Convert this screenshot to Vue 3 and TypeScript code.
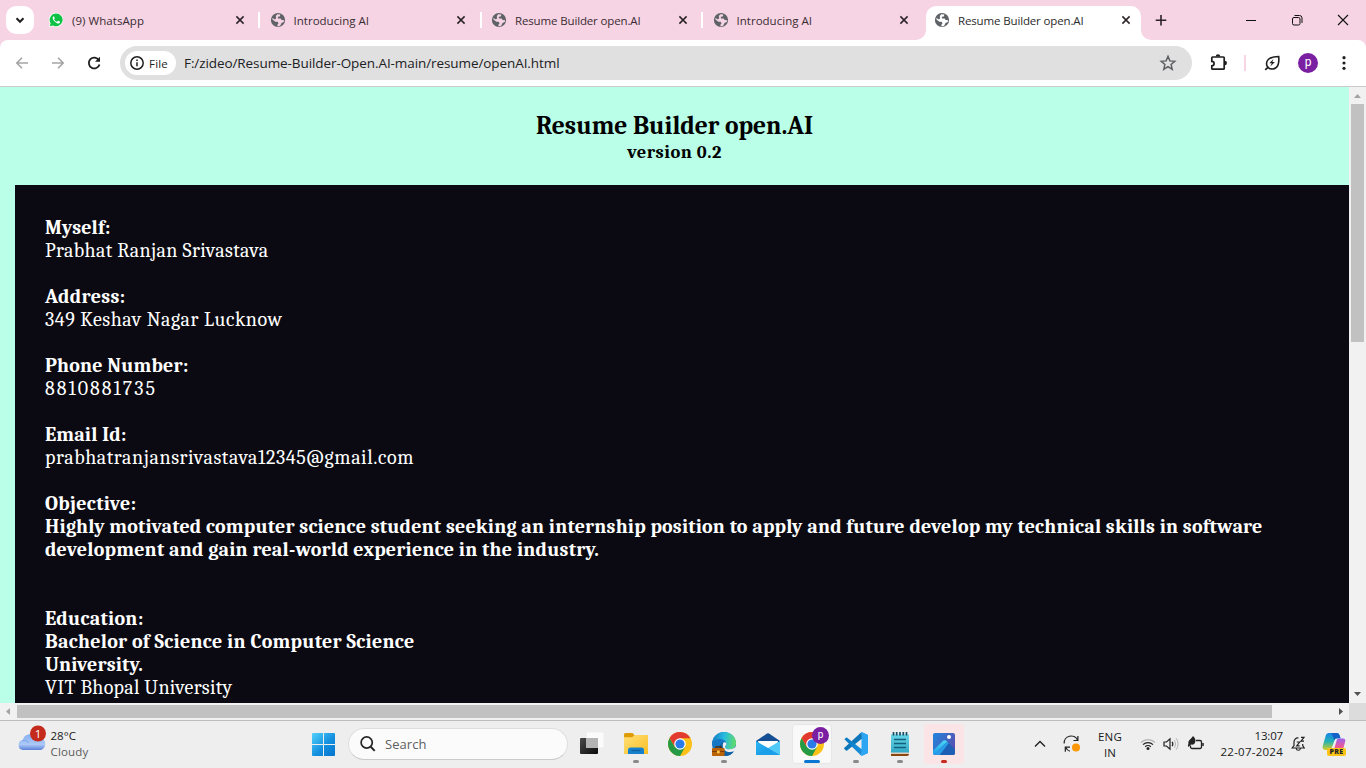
<script setup lang="ts">
import type { Directive } from 'vue'

interface Tab {
  title: string
  width: number
  icon: 'whatsapp' | 'globe'
  active?: boolean
}

interface Line {
  text: string
  width: number
  bold?: boolean
}

const tabs: Tab[] = [
  { title: '(9) WhatsApp', width: 72, icon: 'whatsapp' },
  { title: 'Introducing AI', width: 75.5, icon: 'globe' },
  { title: 'Resume Builder open.AI', width: 125.5, icon: 'globe' },
  { title: 'Introducing AI', width: 75.5, icon: 'globe' },
  { title: 'Resume Builder open.AI', width: 125.5, icon: 'globe', active: true },
]

const sections: Line[][] = [
  [
    { text: 'Myself:', width: 65.5, bold: true },
    { text: 'Prabhat Ranjan Srivastava', width: 223.5 },
  ],
  [
    { text: 'Address:', width: 80.5, bold: true },
    { text: '349 Keshav Nagar Lucknow', width: 237.5 },
  ],
  [
    { text: 'Phone Number:', width: 143.5, bold: true },
    { text: '8810881735', width: 112 },
  ],
  [
    { text: 'Email Id:', width: 81.5, bold: true },
    { text: 'prabhatranjansrivastava12345@gmail.com', width: 369 },
  ],
  [
    { text: 'Objective:', width: 91.5, bold: true },
    {
      text: 'Highly motivated computer science student seeking an internship position to apply and future develop my technical skills in software',
      width: 1217.5,
      bold: true,
    },
    { text: 'development and gain real-world experience in the industry.', width: 554, bold: true },
    { text: '\u00a0', width: 0 },
  ],
  [
    { text: 'Education:', width: 98.5, bold: true },
    { text: 'Bachelor of Science in Computer Science', width: 369.5, bold: true },
    { text: 'University.', width: 98, bold: true },
    { text: 'VIT Bhopal University', width: 187.5 },
  ],
]

// Spreads the letters of a text so that it takes the given width.
const vFit: Directive<HTMLElement, number> = {
  mounted(el, { value }) {
    const count = (el.textContent ?? '').trim().length
    if (!value || count < 2) return
    const natural = el.getBoundingClientRect().width
    el.style.letterSpacing = `${(value - natural) / count}px`
  },
}
</script>

<template>
  <div class="screen">
    <header class="tabstrip">
      <button class="tab-search">
        <svg width="28" height="28" viewBox="0 0 28 28"><path d="M10.500 12.300l3.500 3.500 3.500-3.500" fill="none" stroke="#1f1f1f" stroke-width="2" /></svg>
      </button>
      <div class="tabs">
        <div v-for="(tab, i) in tabs" :key="i" class="tab" :class="{ active: tab.active }">
          <svg v-if="tab.icon === 'whatsapp'" class="favicon" viewBox="0 0 16 16">
            <path d="M8 .7a7.200 7.200 0 0 0-6.200 10.900L.8 15.300l3.800-1A7.200 7.200 0 1 0 8 .7z" fill="#fff" />
            <path d="M8.100 1.500a6.400 6.400 0 0 0-5.500 9.700l-.8 3 3.100-.8a6.400 6.400 0 1 0 3.200-11.900z" fill="#0cc143" />
            <path d="M5.500 4.400c-.8.5-1.100 1.500-.6 2.700.9 2 2.400 3.500 4.500 4.300 1.200.4 2.200 0 2.600-.9.2-.6.1-.8-.2-1l-1.400-.7c-.3-.1-.4 0-.6.2l-.5.6c-.2.2-.3.2-.6.1-1.100-.5-1.900-1.200-2.500-2.300-.1-.2-.1-.3.1-.5l.4-.6V5.900l-.6-1.400c-.1-.2-.3-.2-.6-.1z" fill="#fff" />
          </svg>
          <svg v-else class="favicon" viewBox="0 0 16 16">
            <circle cx="8" cy="8" r="7.100" fill="#5f6368" />
            <path d="M7.400 2.300l3 .3-.6 1.800-2 .4.200 1.700h2.600l1 1.400 2.600.4-.5 1.800-2.200.8-1.300 2.900-2.600.6-.2-1.700 1.200-1.500-1.100-1.500H5.300L2.300 7.300l.2-1.200 2.400 1.300 1.300-1.200-.4-2.100z" :fill="tab.active ? '#fff' : '#f6d4e3'" />
          </svg>
          <span class="tab-title"><span v-fit="tab.width">{{ tab.title }}</span></span>
          <svg class="tab-close" viewBox="0 0 16 16"><path d="M4.400 4.400l7.200 7.200M11.600 4.400l-7.200 7.200" stroke="#2a2226" stroke-width="1.500" /></svg>
          <span v-if="i < 3" class="tab-sep"></span>
          <template v-if="tab.active">
            <svg class="flare left" viewBox="0 0 10 10"><path d="M10 0v10H0A10 10 0 0 0 10 0z" fill="#fff" /></svg>
            <svg class="flare right" viewBox="0 0 10 10"><path d="M0 0v10h10A10 10 0 0 1 0 0z" fill="#fff" /></svg>
          </template>
        </div>
        <svg class="new-tab" viewBox="0 0 28 28"><path d="M14 9v10.500M8.700 14.200h10.600" stroke="#2a2226" stroke-width="1.600" /></svg>
      </div>
      <div class="window-buttons">
        <svg viewBox="0 0 46 40"><path d="M18 20.500h10" stroke="#111" /></svg>
        <svg viewBox="0 0 46 40"><g fill="none" stroke="#111"><rect x="18.500" y="17.500" width="7.500" height="7.500" rx="1.500" /><path d="M20.500 15.500h5a2.500 2.500 0 0 1 2.500 2.500v5" /></g></svg>
        <svg viewBox="0 0 46 40"><path d="M18 15l10 10M28 15L18 25" stroke="#111" stroke-width="1.100" /></svg>
      </div>
    </header>

    <div class="toolbar">
      <div class="nav">
        <svg viewBox="0 0 24 24"><path d="M18 12H7.300M12 6.800L6.800 12l5.200 5.200" fill="none" stroke="#a5a5a5" stroke-width="1.600" /></svg>
        <svg viewBox="0 0 24 24"><path d="M6 12h10.700M12 6.800l5.200 5.200-5.200 5.200" fill="none" stroke="#a5a5a5" stroke-width="1.600" /></svg>
        <svg viewBox="0 0 24 24"><path d="M16.900 9.200a5.400 5.400 0 1 0 .6 4.200" fill="none" stroke="#1f1f1f" stroke-width="1.800" /><path d="M18 5.800v5h-5z" fill="#1f1f1f" /></svg>
      </div>
      <div class="omnibox">
        <div class="chip">
          <svg width="16" height="16" viewBox="0 0 16 16"><circle cx="8" cy="8" r="6.200" fill="none" stroke="#1f1f1f" stroke-width="1.500" /><path d="M8 7.200v4M8 4.500v1.600" stroke="#1f1f1f" stroke-width="1.500" /></svg>
          <span v-fit="19">File</span>
        </div>
        <div class="url"><span v-fit="375.500">F:/zideo/Resume-Builder-Open.AI-main/resume/openAI.html</span></div>
        <svg class="star" viewBox="0 0 18 18"><path d="M9 2.400l1.900 4.500 4.900.4-3.700 3.200 1.100 4.800L9 12.700l-4.200 2.600 1.100-4.800L2.200 7.300l4.900-.4z" fill="none" stroke="#5f6063" stroke-width="1.500" /></svg>
      </div>
      <div class="tools">
        <svg class="puzzle" width="20" height="20" viewBox="0 0 20 20"><path d="M3.600 4h10.800a.8.800 0 0 1 .8.800v10.600a.8.800 0 0 1-.8.800H3.600a.8.800 0 0 1-.8-.8v-2.500a2.100 2.100 0 0 0 0-4.600V4.800a.8.800 0 0 1 .8-.8z" fill="none" stroke="#1f1f1f" stroke-width="1.700" /><path d="M6.700 3.500a2.300 2.300 0 0 1 4.600 0zM15.700 7.800a2.200 2.200 0 0 1 0 4.500z" fill="#1f1f1f" /></svg>
        <span class="tool-sep"></span>
        <svg class="leaf" width="18" height="18" viewBox="0 0 18 18"><path d="M15.700 2.500c.5 5.200-.1 8.700-2.300 10.800-2.300 2.200-6 2.300-8.200.3-2.300-2.200-2.200-5.900.1-8.100 2.100-2 5.500-3 10.400-3z" fill="none" stroke="#1f1f1f" stroke-width="1.600" /><path d="M2.200 15.800l3.300-3" stroke="#1f1f1f" stroke-width="1.700" /><path d="M10.500 5.100L6.300 9.300h2.500l-1.500 3.200 4.600-4.400H9.300z" fill="#1f1f1f" /></svg>
        <span class="avatar">p</span>
        <svg class="dots" width="6" height="18" viewBox="0 0 6 18"><g fill="#1f1f1f"><circle cx="3" cy="3.700" r="1.600" /><circle cx="3" cy="9" r="1.600" /><circle cx="3" cy="14.300" r="1.600" /></g></svg>
      </div>
    </div>

    <div class="viewport">
      <main class="page">
        <div class="page-head">
          <h1><span v-fit="277">Resume Builder open.AI</span></h1>
          <h2><span v-fit="94.500">version 0.2</span></h2>
        </div>
        <article class="resume">
          <section v-for="(section, s) in sections" :key="s">
            <p v-for="(line, l) in section" :key="l" :class="{ bold: line.bold }"><span v-fit="line.width">{{ line.text }}</span></p>
          </section>
        </article>
      </main>
      <div class="vbar">
        <svg viewBox="0 0 17 17"><path d="M5 11l3.500-4 3.500 4z" fill="#a3a3a3" /></svg>
        <div class="vthumb"></div>
        <svg class="end" viewBox="0 0 17 17"><path d="M5 6l3.500 4L12 6z" fill="#505050" /></svg>
      </div>
      <div class="hbar">
        <svg viewBox="0 0 17 17"><path d="M10 5L6 8.500l4 3.500z" fill="#a3a3a3" /></svg>
        <div class="hthumb"></div>
        <svg class="end" viewBox="0 0 17 17"><path d="M7 5l4 3.500L7 12z" fill="#505050" /></svg>
      </div>
      <div class="corner"></div>
    </div>

    <footer class="taskbar">
      <svg width="0" height="0" class="defs">
        <defs>
          <linearGradient id="win" gradientUnits="userSpaceOnUse" x1="0" y1="0" x2="23" y2="23"><stop offset="0" stop-color="#52d2fc" /><stop offset=".55" stop-color="#1490df" /><stop offset="1" stop-color="#0473ce" /></linearGradient>
          <linearGradient id="cloud" x1="0" y1="0" x2="0" y2="1"><stop offset="0" stop-color="#86aef0" /><stop offset=".65" stop-color="#acc9f7" /><stop offset="1" stop-color="#5c80d8" /></linearGradient>
          <linearGradient id="folder" x1="0" y1="0" x2="1" y2="1"><stop offset="0" stop-color="#ffdf77" /><stop offset="1" stop-color="#fbbf24" /></linearGradient>
          <linearGradient id="edgeTop" x1="0" y1=".4" x2="1" y2=".5"><stop offset="0" stop-color="#137bc4" /><stop offset=".5" stop-color="#29bcdf" /><stop offset="1" stop-color="#62dc65" /></linearGradient>
          <linearGradient id="mail" x1="0" y1="0" x2="1" y2="1"><stop offset="0" stop-color="#2bb4f1" /><stop offset="1" stop-color="#1593e2" /></linearGradient>
          <linearGradient id="note" x1="0" y1="0" x2="0" y2="1"><stop offset="0" stop-color="#67d6e8" /><stop offset="1" stop-color="#31a9c5" /></linearGradient>
          <linearGradient id="photo" x1="0" y1="0" x2="1" y2=".6"><stop offset="0" stop-color="#1f86dd" /><stop offset="1" stop-color="#5a4fb0" /></linearGradient>
          <linearGradient id="hill" x1="0" y1="1" x2="1" y2="0"><stop offset="0" stop-color="#1f9ce8" /><stop offset="1" stop-color="#4fdcf5" /></linearGradient>
          <linearGradient id="copA" x1="0" y1="0" x2="0" y2="1"><stop offset="0" stop-color="#1583e9" /><stop offset=".5" stop-color="#25b2b2" /><stop offset="1" stop-color="#d3cf28" /></linearGradient>
          <linearGradient id="copB" x1="0" y1="0" x2="0" y2="1"><stop offset="0" stop-color="#9b63ee" /><stop offset=".6" stop-color="#ee5793" /><stop offset="1" stop-color="#fa8c54" /></linearGradient>
          <linearGradient id="dark" x1="0" y1="0" x2="1" y2="1"><stop offset="0" stop-color="#4a4a4a" /><stop offset="1" stop-color="#0b0b0b" /></linearGradient>
          <linearGradient id="code" x1="0" y1="0" x2="1" y2="0"><stop offset="0" stop-color="#0878be" /><stop offset="1" stop-color="#1c91df" /></linearGradient>
          <g id="chrome">
            <circle cx="12" cy="12" r="12" fill="#fbc116" />
            <path d="M6.900 14.900L1.610 6A12 12 0 0 0 12 24l5-9z" fill="#249a46" />
            <path d="M1.610 6A12 12 0 0 1 22.400 6.200H12L7 15z" fill="#e23a2e" />
            <circle cx="12" cy="12" r="5.800" fill="#fff" /><circle cx="12" cy="12" r="4.600" fill="#2a7bea" />
          </g>
        </defs>
      </svg>

      <div class="weather">
        <svg width="32" height="32" viewBox="0 0 32 32">
          <path d="M6 27a5 5 0 0 1-.2-9.900A7.700 7.700 0 0 1 20 15a6 6 0 0 1 4 12z" fill="url(#cloud)" />
          <path d="M5 17.500c3-.7 5.500.3 6.700 2.500" fill="none" stroke="#7298e5" stroke-width=".7" />
          <circle cx="21" cy="10.500" r="8" fill="#c42b1c" />
        </svg>
        <span class="weather-badge">1</span>
        <div class="weather-text">
          <div><span v-fit="25.500">28°C</span></div>
          <div class="muted"><span v-fit="38">Cloudy</span></div>
        </div>
      </div>

      <div class="apps">
        <svg class="start" width="24" height="24" viewBox="0 0 24 24"><path d="M1 0h10v11H0V1a1 1 0 0 1 1-1zM12 0h10a1 1 0 0 1 1 1v10H12zM0 12h11v11H1a1 1 0 0 1-1-1zM12 12h11v10a1 1 0 0 1-1 1H12z" fill="url(#win)" /></svg>
        <div class="search">
          <svg width="18" height="18" viewBox="0 0 18 18"><circle cx="7.700" cy="7.500" r="5.600" fill="none" stroke="#262626" stroke-width="1.700" /><path d="M11.700 11.700l4 4.200" stroke="#262626" stroke-width="2" /></svg>
          <span v-fit="41.500">Search</span>
        </div>
        <div class="app"><svg viewBox="0 0 24 24"><rect x="6" y="0" width="18" height="16" rx="1" fill="#fbfbfb" stroke="#e5e5e5" stroke-width=".6" /><rect x="0" y="6" width="18" height="16" rx="1" fill="url(#dark)" /><path d="M6 6h12v10H6z" fill="#b4b4b4" /></svg></div>
        <div class="app open"><svg viewBox="0 0 24 24"><path d="M0 2.500A1.500 1.500 0 0 1 1.500 1h7L11 3.500h11.500A1.500 1.500 0 0 1 24 5v5H0z" fill="#df9c08" /><path d="M0 5.300h8.300L10.500 3H24v19H0z" fill="url(#folder)" /><path d="M4 22v-4a2.500 2.500 0 0 1 2.500-2.500h11A2.500 2.500 0 0 1 20 18v4z" fill="#1781ce" /><path d="M7.500 18.500h9" stroke="#10609b" stroke-width="1.200" /></svg></div>
        <div class="app"><svg viewBox="0 0 24 24"><use href="#chrome" /></svg></div>
        <div class="app open"><svg viewBox="0 0 24 24"><circle cx="12" cy="12" r="12" fill="#1676c6" /><path d="M0 11.500C.8 4.800 6 0 12.200 0 19 0 24 5 24 11c0 4.200-3.200 6.300-6.700 6.300-2.700 0-4.300-1-4.300-2.200 0-.9 1.400-1.300 1.400-3.400C14.400 8.900 11 7 7.500 7 4 7 1 9 0 11.500z" fill="url(#edgeTop)" /><path d="M11.500 10.500c-2.300 2.700-1.200 7.300 3 9.300 3 1.300 6.300.4 7.700-.9-2 3.600-5.700 5.100-9.200 5.100-4-.8-6-4-5.900-7.500.1-2.700 1.800-5.300 4.400-6z" fill="#115e9f" /><path d="M11.500 10.500c1.700-.7 3 .2 2.900 1.500-.2 1.500-1.400 2-1.400 3 .3 1.500 2 2.300 4.300 2.300 3 0 5.300-1 6.500-3.300.1 2.800-.7 4.200-1.600 4.900-3 1.700-7.700 1.500-9.800-1.200-1.800-2.300-2.200-5-.9-7.200z" fill="#eee" /><path d="M4 16v-1.200h5V16" fill="none" stroke="#522604" stroke-width="1.200" /><rect x="0" y="16" width="12.500" height="8" rx=".8" fill="#b96207" /><path d="M0 19.500h12.500" stroke="#7c3c05" /><rect x="5" y="18.600" width="2.700" height="2.700" fill="#ffc84d" /></svg></div>
        <div class="app"><svg viewBox="0 0 24 24"><path d="M0 9l11-7.500a2 2 0 0 1 2 0L24 9v5H0z" fill="#144f93" /><path d="M2 9h20l-2 8H4z" fill="#fff" /><path d="M0 9l24 14H0z" fill="url(#mail)" /><path d="M24 9L12 16l12 7z" fill="#52caf7" /><path d="M12 16l12 7H0z" fill="#1c9fe9" /></svg></div>
        <div class="app current"><svg viewBox="0 0 24 24"><use href="#chrome" /></svg><span class="badge">p</span></div>
        <div class="app open"><svg viewBox="0 0 24 24"><path d="M17.500 0v24L24 21V3z" fill="#29a5f3" /><path d="M17.500 0l.5 6.500L3.200 18.600a1 1 0 0 1-1.200 0L.4 17.100a.9.900 0 0 1 0-1.300z" fill="#0c76b9" /><path d="M.4 7.200L2 5.700a1 1 0 0 1 1.200 0L18 17.500l-.5 6.500z" fill="url(#code)" /><path d="M17.500 0L24 3v18l-6.500 3c.4-.3.500-.8.500-1.500V1.500c0-.7-.1-1.200-.5-1.500z" fill="#2ca5f3" /></svg></div>
        <div class="app open"><svg viewBox="0 0 24 24"><path d="M3 20.500h18V22a2 2 0 0 1-2 2H3z" fill="#8b450e" /><path d="M3 20.300h18v1.500H3z" fill="#f1eeeb" /><path d="M3 2.500h18v18H3z" fill="url(#note)" /><path d="M6 7.500h12M6 11.500h12M6 15.500h12" stroke="#125e7c" stroke-width="1.500" /><path d="M5.500 0v3.500M8.700 0v3.500M12 0v3.500M15.300 0v3.500M18.500 0v3.500" stroke="#154e66" stroke-width="1.700" /></svg></div>
        <div class="app open alert"><svg viewBox="0 0 24 24"><rect x="1" y="1" width="22" height="22" rx="2" fill="url(#photo)" /><path d="M3 23l9.500-13.500c.8-.8 2-.8 2.800 0L23 17.500V21a2 2 0 0 1-2 2z" fill="#1d5fb4" /><path d="M1 18.500l9.300-9a3.300 3.300 0 0 1 4.700 0l1.500 1.700a2.500 2.500 0 0 0-3.300.2L2 22.700a2 2 0 0 1-1-1.700z" fill="url(#hill)" /><path d="M2 22.800L13.300 11.300a2.400 2.400 0 0 1 3.400 0l-9 11.700H3z" fill="#2a9be6" /><circle cx="17" cy="5" r="2" fill="#fff" /></svg></div>
      </div>

      <div class="tray">
        <svg class="chev" width="12" height="8" viewBox="0 0 12 8"><path d="M1 6.500l5-5 5 5" fill="none" stroke="#222" stroke-width="1.400" /></svg>
        <svg class="sync" width="18" height="18" viewBox="0 0 18 18"><path d="M1.200 8.500A7 7 0 0 1 14.500 5M14.900 1v4.500h-4.500M7 12.200H2.300v4.500M2.800 12.700a7 7 0 0 0 4.200 3.500" fill="none" stroke="#222" stroke-width="1.200" /><circle cx="13" cy="12.500" r="4" fill="#fb9606" /></svg>
        <div class="lang"><div><span v-fit="24">ENG</span></div><div><span v-fit="12">IN</span></div></div>
        <svg class="wifi" width="16" height="14" viewBox="0 0 16 14"><g fill="none" stroke-width="1.200"><path d="M1 5.500a10 10 0 0 1 14 0" stroke="#b4b4b4" /><path d="M3 7.700a7 7 0 0 1 10 0M5.200 9.800a4 4 0 0 1 5.600 0" stroke="#222" /></g><circle cx="8" cy="11.500" r="1.500" fill="#222" /></svg>
        <svg class="sound" width="16" height="14" viewBox="0 0 16 14"><g fill="none" stroke="#222" stroke-width="1.200"><path d="M1 5h2.500L7 1.800v10.400L3.500 9H1z" /><path d="M9 4.800a3.500 3.500 0 0 1 0 4.400" /></g><path d="M11 3a6 6 0 0 1 0 8M13 1.200a9 9 0 0 1 0 11.600" fill="none" stroke="#b4b4b4" /></svg>
        <svg class="battery" width="18" height="14" viewBox="0 0 18 14"><path d="M9 4.500h4a1.500 1.500 0 0 1 1.500 1.500v5a1.500 1.500 0 0 1-1.500 1.500H5A1.500 1.500 0 0 1 3.500 11V9.500" fill="none" stroke="#222" stroke-width="1.300" /><path d="M16 7v3" stroke="#222" stroke-width="1.500" /><path d="M6 0c1.800 1.500 2.900 3.800 2.300 6C7.800 8 6 9 4 8.500L1.500 11 .8 9.200 1.500 8C.8 5.500 2 4.500 3.500 3 4.600 2 5.300 1.200 6 0z" fill="#222" /></svg>
        <div class="clock"><div><span v-fit="28.500">13:07</span></div><div><span v-fit="62.500">22-07-2024</span></div></div>
        <svg class="bell" width="15" height="16" viewBox="0 0 15 16"><path d="M7.500 2C4.500 1.600 3 4 3 6v3.500L1.200 12h12L11.700 9.500V8M5.200 12.500c.4 2.300 3.800 2.300 4.200 0M5.700 6h3L5.700 9.800h3M10 1.300h3l-3 3.900h3" fill="none" stroke="#222" stroke-width="1.200" /></svg>
        <div class="copilot">
          <svg width="24" height="24" viewBox="0 0 24 24"><path d="M7 1h7.500c2 0 2.700 1.200 3.300 3l.7 2.200h-3.200c-1.700 0-2.400.8-2.900 2.300L10 15.500C9.500 17 8.500 18 6.500 18H3.700C1.300 18 .2 16.500.7 14L3.700 3.700C4.200 2 5.200 1 7 1z" fill="url(#copA)" /><path d="M9.500 1h5c2 0 2.700 1.200 3.300 3l.7 2.200h-3.200c-1.700 0-2.400.8-2.900 2.300z" fill="#1461c8" /><path d="M16 6.500h5c2 0 2.600 1.300 2.200 3L21 17.500c-.5 2-1.500 3-3.500 3H9c1.800 0 2.300-1 2.800-2.500l2.700-9c.4-1.500.8-2.500 1.500-2.500z" fill="url(#copB)" /></svg>
          <span class="pre">PRE</span>
        </div>
      </div>
    </footer>
  </div>
</template>

<style>
html,
body {
  margin: 0;
  overflow: hidden;
}
</style>

<style scoped>
.screen {
  width: 1366px;
  height: 768px;
  display: flex;
  flex-direction: column;
  overflow: hidden;
  background: #f6d4e3;
  color: #1f1f1f;
  font-family: 'Segoe UI', 'Open Sans', 'Noto Sans', sans-serif;
  font-size: 11.5px;
}
.screen * {
  box-sizing: border-box;
}
svg {
  display: block;
  flex: none;
}
span {
  white-space: pre;
}

.tabstrip {
  height: 40px;
  flex: none;
  display: flex;
}
.tab-search {
  width: 28px;
  height: 28px;
  margin: 6px 6px 0;
  padding: 0;
  border: 0;
  border-radius: 10px;
  background: #fff;
}
.tabs {
  flex: 1;
  display: flex;
}
.tab {
  position: relative;
  width: 221.5px;
  height: 34px;
  margin-top: 6px;
  padding: 0 0 6px 8px;
  display: flex;
  align-items: center;
  color: #3a2c33;
}
.tab.active {
  width: 215px;
  background: #fff;
  border-radius: 10px 10px 0 0;
  color: #2b2b2b;
}
.favicon {
  width: 16px;
  height: 16px;
  margin-right: 8px;
}
.tab-title {
  width: 159.5px;
  padding-top: 1px;
  line-height: 16px;
}
.tab-close {
  width: 16px;
  height: 16px;
}
.tab-sep {
  position: absolute;
  left: 218px;
  top: 6px;
  width: 2px;
  height: 16px;
  background: #fff;
}
.flare {
  position: absolute;
  bottom: 0;
  width: 10px;
  height: 10px;
}
.flare.left {
  left: -10px;
}
.flare.right {
  right: -10px;
}
.new-tab {
  width: 28px;
  height: 28px;
  margin: 6px 0 0 6px;
}
.window-buttons {
  display: flex;
}
.window-buttons svg {
  width: 46px;
  height: 40px;
}

.toolbar {
  height: 47px;
  flex: none;
  display: flex;
  align-items: flex-start;
  background: #fff;
  border-bottom: 1px solid #cbcbcb;
  border-radius: 8px 8px 0 0;
}
.nav {
  width: 120px;
  padding: 11px 0 0 10px;
  display: flex;
  gap: 12px;
}
.nav svg {
  width: 24px;
  height: 24px;
}
.omnibox {
  width: 1072px;
  height: 34px;
  margin-top: 6px;
  padding: 0 15px 0 5px;
  display: flex;
  align-items: center;
  background: #e0e0e0;
  border-radius: 17px;
}
.chip {
  width: 51px;
  height: 24px;
  padding-left: 4px;
  display: flex;
  align-items: center;
  gap: 4px;
  border-radius: 12px;
  background: #fff;
  color: #1f1f1f;
}
.url {
  flex: 1;
  padding-left: 8px;
  font-size: 13.5px;
  line-height: 20px;
  color: #202124;
}
.star {
  width: 18px;
  height: 18px;
}
.tools {
  flex: 1;
  height: 46px;
  display: flex;
  align-items: center;
}
.puzzle {
  margin-left: 17px;
}
.tool-sep {
  width: 2px;
  height: 16px;
  margin-left: 15px;
  background: #f6d4e3;
}
.leaf {
  margin-left: 17px;
}
.avatar {
  width: 20px;
  height: 20px;
  margin-left: 17px;
  border-radius: 50%;
  background: #7b1fa2;
  color: #fff;
  font: 12px/18px Roboto, sans-serif;
  text-align: center;
}
.dots {
  margin-left: 23px;
}

.viewport {
  height: 633px;
  flex: none;
  display: grid;
  grid-template: 616px 17px / 1349px 17px;
}
.page {
  overflow: hidden;
  background: #baffe7;
  font-family: Cambria, Caladea, 'Liberation Serif', serif;
}
.page-head {
  height: 98px;
  padding-top: 24px;
  text-align: center;
  color: #000;
}
.page-head h1 {
  margin: 0;
  font-size: 25.5px;
  line-height: 30px;
}
.page-head h2 {
  margin: 0;
  font-size: 18.5px;
  line-height: 22px;
}
.resume {
  height: 518px;
  margin-left: 15px;
  padding: 31px 0 0 30px;
  display: flex;
  flex-direction: column;
  gap: 23px;
  overflow: hidden;
  background: #0b0a12;
  color: #fff;
  font-size: 20px;
  line-height: 23px;
}
.resume section {
  flex: none;
}
.resume p {
  height: 23px;
  margin: 0;
}
.resume .bold {
  font-weight: 700;
}
.vbar,
.hbar {
  display: flex;
  background: #f1f1f1;
}
.vbar {
  grid-area: 1 / 2;
  flex-direction: column;
}
.hbar {
  grid-area: 2 / 1;
}
.vbar svg,
.hbar svg {
  width: 17px;
  height: 17px;
}
.vthumb {
  height: 238px;
  margin: 0 2px;
  background: #c1c1c1;
}
.vbar .end {
  margin-top: auto;
}
.hthumb {
  width: 1255px;
  margin: 2px 0;
  background: #c1c1c1;
}
.hbar .end {
  margin-left: auto;
}
.corner {
  background: #dcdcdc;
}

.taskbar {
  position: relative;
  height: 48px;
  flex: none;
  display: flex;
  border-top: 1px solid #bdbdbd;
  background: #eee;
  color: #1b1b1b;
}
.defs {
  position: absolute;
}
.weather {
  position: relative;
  width: 312px;
  padding: 2px 0 0 17px;
  display: flex;
  line-height: 16px;
}
.weather-badge {
  position: absolute;
  left: 30px;
  top: 5px;
  width: 16px;
  color: #fff;
  text-align: center;
}
.weather-text {
  padding-top: 5px;
  margin-left: 1.5px;
}
.muted {
  color: #5c5c5c;
}
.apps {
  width: 720px;
  display: flex;
  align-items: flex-start;
}
.start {
  margin-top: 12px;
}
.search {
  width: 220px;
  height: 32px;
  margin: 7px 2px 0 12px;
  padding-left: 10px;
  display: flex;
  align-items: center;
  gap: 8px;
  border: 1px solid #dedede;
  border-bottom-color: #cacaca;
  border-radius: 16px;
  background: #fbfbfb;
  color: #606060;
  font-size: 13px;
}
.app {
  position: relative;
  width: 40px;
  height: 40px;
  margin: 3px 2px 0;
  padding: 8px;
  border-radius: 4px;
}
.app svg {
  width: 24px;
  height: 24px;
}
.app.open::after,
.app.current::after {
  content: '';
  position: absolute;
  left: 17px;
  bottom: 1px;
  width: 6px;
  height: 3px;
  border-radius: 2px;
  background: #8a8a8a;
}
.app.current {
  background: #f9f9f9;
  box-shadow: inset 0 0 0 1px #e6e6e6;
}
.app.current::after {
  left: 12px;
  width: 16px;
  background: #0a76d4;
}
.app.alert {
  background: #fbe4e5;
}
.app.alert::after {
  background: #c42b1c;
}
.badge {
  position: absolute;
  left: 20px;
  top: 3px;
  width: 17px;
  height: 17px;
  border-radius: 50%;
  background: #7b1fa2;
  color: #fff;
  font: 10px/15px Roboto, sans-serif;
  text-align: center;
}
.tray {
  flex: 1;
  display: flex;
  align-items: flex-start;
  line-height: 16px;
}
.chev {
  margin: 19px 0 0 2px;
}
.sync {
  margin: 14px 0 0 17px;
}
.lang {
  width: 28px;
  margin: 8px 0 0 15px;
  text-align: center;
}
.wifi {
  margin: 16px 0 0 16px;
}
.sound {
  margin: 16px 0 0 7px;
}
.battery {
  margin: 15px 0 0 8px;
}
.clock {
  width: 70px;
  margin: 7px 0 0 8px;
  text-align: right;
}
.bell {
  margin: 15px 0 0 8px;
}
.copilot {
  position: relative;
  margin: 11px 0 0 16px;
}
.pre {
  position: absolute;
  left: 5px;
  top: 16px;
  width: 19px;
  height: 8px;
  border-radius: 2px;
  background: #fcc419;
  color: #222;
  font: 800 7px/8px 'Open Sans', sans-serif;
  letter-spacing: 0.3px;
  text-align: center;
}
</style>
